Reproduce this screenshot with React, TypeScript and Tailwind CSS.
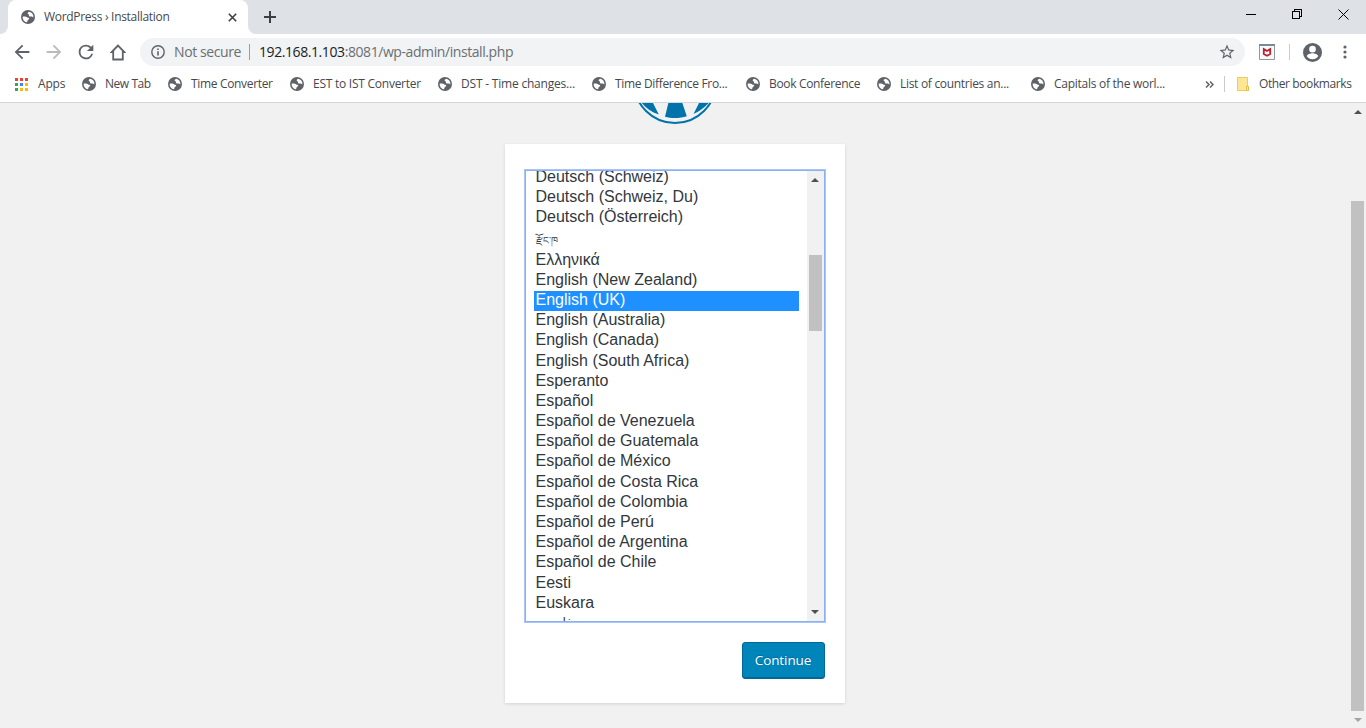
import React from "react";

function Globe({ className = "" }: { className?: string }) {
  return (
    <svg viewBox="0 0 14 14" className={`h-[14px] w-[14px] shrink-0 ${className}`}>
      <circle cx="7" cy="7" r="7" fill="#5f6368" />
      <path
        d="M8.2 1.7 C7.6 2 6.6 2.6 6.6 3.3 C6.7 4.2 7.6 4 7.8 4.6 C7.9 5.3 7.8 6.2 8.6 6.5 C9.4 6.7 10.2 6.3 10.9 6.6 C11.5 6.9 11.8 7.4 12.4 7.5 C12.7 4.6 11 2.3 8.2 1.7Z M1.6 6.7 C3.3 6.4 5.3 6.5 6.1 7.3 C6.6 8.1 8 7.7 8.2 8.6 C8.3 9.5 7.2 9.8 6.7 10.3 C6.3 10.9 6.5 11.7 5.9 12.3 C3.3 11.8 1.5 9.6 1.6 6.7Z"
        fill="#fff"
      />
    </svg>
  );
}

const bookmarks = [
  { name: "New Tab", box: "w-[86px]", text: "tracking-[-0.45px]" },
  { name: "Time Converter", box: "w-[122px]", text: "tracking-[-0.33px]" },
  { name: "EST to IST Converter", box: "w-[148px]", text: "tracking-[-0.25px]" },
  { name: "DST - Time changes...", box: "w-[154px]", text: "tracking-[-0.2px]" },
  { name: "Time Difference Fro...", box: "w-[154px]", text: "tracking-[-0.33px]" },
  { name: "Book Conference", box: "w-[131px]", text: "tracking-[-0.33px]" },
  { name: "List of countries an...", box: "w-[154px]", text: "tracking-[-0.3px]" },
  { name: "Capitals of the worl...", box: "w-[154px]", text: "tracking-[-0.27px]" },
];

const languages = [
  "Deutsch (Schweiz)",
  "Deutsch (Schweiz, Du)",
  "Deutsch (Österreich)",
  "རྫོང་ཁ",
  "Ελληνικά",
  "English (New Zealand)",
  "English (UK)",
  "English (Australia)",
  "English (Canada)",
  "English (South Africa)",
  "Esperanto",
  "Español",
  "Español de Venezuela",
  "Español de Guatemala",
  "Español de México",
  "Español de Costa Rica",
  "Español de Colombia",
  "Español de Perú",
  "Español de Argentina",
  "Español de Chile",
  "Eesti",
  "Euskara",
  "فارسی",
];

const rowStyles: Record<number, string> = {
  3: "h-[23px] pt-[3px] font-['Noto_Sans',serif] text-[10px]",
  6: "h-[20px] bg-[#1e90ff] text-white",
  8: "h-[21px]",
  14: "h-[21px]",
  19: "h-[21px]",
  22: "h-[20px] text-[12.5px]",
};

const appColors = [
  "bg-[#ea4335]", "bg-[#ea4335]", "bg-[#ea4335]",
  "bg-[#34a853]", "bg-[#4285f4]", "bg-[#fbbc05]",
  "bg-[#34a853]", "bg-[#fbbc05]", "bg-[#fbbc05]",
];

function TabStrip() {
  return (
    <div className="flex h-[34px] bg-[#dee1e6]">
      <svg width="8" height="34" className="shrink-0"><path d="M8 26 A8 8 0 0 1 0 34 H8Z" fill="#fff" /></svg>
      <div className="flex w-[240px] items-center rounded-t-[8px] bg-white pl-[13px]">
        <Globe />
        <span className="ml-[9px] w-[184px] text-[12px] tracking-[-0.3px] text-[#45494d]">WordPress › Installation</span>
        <svg width="9" height="9" viewBox="0 0 9 9"><path d="M.8 .8 8.2 8.2M8.2 .8 .8 8.2" stroke="#3c4043" strokeWidth="1.6" /></svg>
      </div>
      <svg width="8" height="34" className="shrink-0"><path d="M0 26 A8 8 0 0 0 8 34 H0Z" fill="#fff" /></svg>
      <svg width="12" height="12" viewBox="0 0 12 12" className="ml-[8px] mt-[11px]"><path d="M6 0V12M0 6H12" stroke="#3c4043" strokeWidth="2" /></svg>
      <div className="ml-auto flex pt-[9px] text-black">
        <svg width="10" height="11" shapeRendering="crispEdges" className="mr-[36px]"><path d="M0 5.5H10" stroke="currentColor" /></svg>
        <svg width="10" height="11" shapeRendering="crispEdges" className="mr-[36px]"><path d="M.5 2.5H7.5V9.5H.5ZM2.5 2.5V.5H9.5V7.5H7.5" fill="none" stroke="currentColor" /></svg>
        <svg width="11" height="11" className="mr-[17px]"><path d="M.5 .5 10.5 10.5M10.5 .5 .5 10.5" stroke="currentColor" /></svg>
      </div>
    </div>
  );
}

function Toolbar() {
  return (
    <div className="flex h-[36px] items-center bg-white pl-[10px]">
      <svg viewBox="0 0 24 24" className="ml-px h-[22px] w-[22px] shrink-0 fill-[#5f6368]"><path d="M20 11H7.83l5.59-5.59L12 4l-8 8 8 8 1.41-1.41L7.83 13H20z" /></svg>
      <svg viewBox="0 0 24 24" className="ml-[10px] h-[22px] w-[22px] shrink-0 fill-[#b9bbbe]"><path d="M12 4l-1.41 1.41L16.17 11H4v2h12.17l-5.58 5.59L12 20l8-8z" /></svg>
      <svg viewBox="0 0 24 24" className="ml-[10px] h-[22px] w-[22px] shrink-0 fill-[#5f6368]"><path d="M17.65 6.35A7.96 7.96 0 0 0 12 4a8 8 0 1 0 7.73 10h-2.08A6 6 0 1 1 12 6c1.66 0 3.14.69 4.22 1.78L13 11h7V4z" /></svg>
      <svg width="16" height="17" viewBox="0 0 16 17" className="ml-[13px] shrink-0"><path d="M8 1.5 1.7 8H3.2V15.5H12.8V8H14.3Z" fill="none" stroke="#5f6368" strokeWidth="1.8" /></svg>
      <div className="ml-[14px] flex h-[28px] w-[1105px] shrink-0 items-center rounded-full bg-[#f1f3f4] pl-[11px] text-[14px]">
        <svg width="14" height="14" viewBox="0 0 14 14"><circle cx="7" cy="7" r="6.2" fill="none" stroke="#5f6368" strokeWidth="1.4" /><path d="M7 6.2V10.5M7 3.5V5" stroke="#5f6368" strokeWidth="1.6" /></svg>
        <span className="ml-[9px] w-[75px] whitespace-nowrap pb-[2px] tracking-[-0.4px] text-[#6b6f73]">Not secure</span>
        <span className="h-[16px] w-px bg-[#9a9da1]" />
        <span className="ml-[9px] whitespace-nowrap pb-[2px] tracking-[-0.42px] text-[#6b6f73]"><span className="text-[#202124]">192.168.1.103</span>:8081/wp-admin/install.php</span>
        <svg viewBox="0 0 24 24" className="ml-auto mr-[9px] h-[18px] w-[18px] fill-[#5f6368]"><path d="M22 9.24l-7.19-.62L12 2 9.19 8.63 2 9.24l5.46 4.73L5.82 21 12 17.27 18.18 21l-1.63-7.03L22 9.24zM12 15.4l-3.76 2.27 1-4.28-3.32-2.88 4.38-.38L12 6.1l1.71 4.04 4.38.38-3.32 2.88 1 4.28L12 15.4z" /></svg>
      </div>
      <svg width="16" height="16" viewBox="0 0 16 16" className="ml-[14px] shrink-0"><path d="M.5.5H15.5V15.5H.5Z" fill="#f8f9fa" stroke="#8f999f" /><path d="M0 0H16V2H0Z" fill="#748b98" /><path d="M4.8 5 8 7 11.2 5V10L8 11.8 4.8 10Z" fill="none" stroke="#bd1f2d" strokeWidth="1.8" /></svg>
      <span className="ml-[14px] h-[16px] w-px shrink-0 bg-[#c8cbd0]" />
      <svg viewBox="2 2 20 20" className="ml-[13px] h-[19px] w-[19px] shrink-0 fill-[#5f6368]"><path d="M12 2a10 10 0 1 0 0 20 10 10 0 0 0 0-20zm0 3a3.5 3.5 0 1 1 0 7 3.5 3.5 0 0 1 0-7zm0 14.2A7.2 7.2 0 0 1 6 16c.03-2 4-3.1 6-3.1s5.97 1.1 6 3.1a7.2 7.2 0 0 1-6 3.2z" /></svg>
      <svg width="4" height="14" viewBox="0 0 4 14" className="ml-[21px] shrink-0 fill-[#5f6368]"><circle cx="2" cy="2" r="1.6" /><circle cx="2" cy="7" r="1.6" /><circle cx="2" cy="12" r="1.6" /></svg>
    </div>
  );
}

function BookmarksBar() {
  return (
    <div className="flex h-[33px] items-center border-b border-[#d5d7da] bg-white pb-[4px] pl-[15px] text-[12px] text-[#45494d]">
      <div className="grid grid-cols-3 gap-[2px]">
        {appColors.map((c, i) => <span key={i} className={`h-[3px] w-[3px] ${c}`} />)}
      </div>
      <span className="ml-[10px] w-[44px] shrink-0 tracking-[-0.2px]">Apps</span>
      {bookmarks.map((b) => (
        <div key={b.name} className={`flex shrink-0 items-center whitespace-nowrap ${b.box}`}>
          <Globe />
          <span className={`ml-[9px] ${b.text}`}>{b.name}</span>
        </div>
      ))}
      <svg width="9" height="7" viewBox="0 0 9 7" className="ml-[20px] shrink-0"><path d="M1 .5 4 3.5 1 6.5M5 .5 8 3.5 5 6.5" fill="none" stroke="#5f6368" strokeWidth="1.5" /></svg>
      <span className="ml-[10px] h-[16px] w-px shrink-0 bg-[#c8cbd0]" />
      <svg width="12" height="14" viewBox="0 0 12 14" className="ml-[12px] shrink-0"><path d="M.5.5H10.5V9.5H11.5V13.5H.5Z" fill="#ffe694" stroke="#edcc5c" /><path d="M9.5 13.5V9.5H11.5V13.5Z" fill="#fff0b8" stroke="#e6bd3d" /></svg>
      <span className="ml-[10px] whitespace-nowrap tracking-[-0.4px]">Other bookmarks</span>
    </div>
  );
}

function Arrow({ down = false, className = "" }: { down?: boolean; className?: string }) {
  return (
    <svg width="8" height="4" viewBox="0 0 8 4" className={className}>
      <path d={down ? "M0 0H8L4 4Z" : "M0 4H8L4 0Z"} fill="currentColor" />
    </svg>
  );
}

function LanguageList() {
  return (
    <div className="flex h-[452px] w-[300px] overflow-hidden border border-[#8bb1f4] bg-white ring-1 ring-[#a9c5f7]">
      <div className="h-full w-[273px] overflow-hidden pl-[8px]">
        <div className="-mt-[3px] font-['Liberation_Sans','DejaVu_Sans',sans-serif] text-[16px] text-[#32373c]">
          {languages.map((name, i) => (
            <div key={name} className={`whitespace-nowrap pl-[2px] leading-[18px] ${rowStyles[i] ?? "h-[20px]"}`}>
              {name}
            </div>
          ))}
        </div>
      </div>
      <div className="ml-auto flex w-[17px] shrink-0 flex-col items-center bg-[#f1f1f1] text-[#505050]">
        <Arrow className="mt-[7px]" />
        <div className="mt-[73px] h-[76px] w-[13px] bg-[#c1c1c1]" />
        <Arrow down className="mb-[7px] mt-auto" />
      </div>
    </div>
  );
}

export default function App() {
  return (
    <div className="flex h-[728px] w-[1366px] flex-col overflow-hidden bg-[#f1f1f1] font-['Open_Sans',sans-serif]">
      <TabStrip />
      <Toolbar />
      <BookmarksBar />
      <div className="flex min-h-0 flex-1">
        <main className="flex flex-1 flex-col items-center">
          <svg width="84" height="21" viewBox="0 63 84 21" className="shrink-0">
            <circle cx="42" cy="42" r="41" fill="none" stroke="#0073aa" strokeWidth="2" />
            <path d="M35.6 62 32 76.7C38 78.6 47 78.7 53.8 76.3L49 62Z M8 62 C12 67.5 18 72 25.8 74.5L19.5 62Z M66.5 62 60.5 74C67 71 73 66.5 76.5 62Z" fill="#0073aa" />
          </svg>
          <section className="mt-[20px] flex h-[559px] w-[340px] flex-col items-end bg-white pr-[20px] pt-[26px] shadow-[0_1px_3px_rgba(0,0,0,0.13)]">
            <LanguageList />
            <button className="mt-[20px] h-[37px] w-[83px] rounded-[3px] border border-[#006799] bg-[#0085ba] text-[13.5px] tracking-[-0.1px] text-white shadow-[inset_0_-1px_0_#006799] [text-shadow:0_-1px_1px_#006799]">Continue</button>
          </section>
        </main>
        <div className="flex w-[17px] shrink-0 flex-col items-center text-[#505050]">
          <Arrow className="mt-[7px]" />
          <div className="mt-[87px] h-[510px] w-[13px] bg-[#c1c1c1]" />
          <Arrow down className="mb-[6px] mt-auto text-[#a3a3a3]" />
        </div>
      </div>
    </div>
  );
}
